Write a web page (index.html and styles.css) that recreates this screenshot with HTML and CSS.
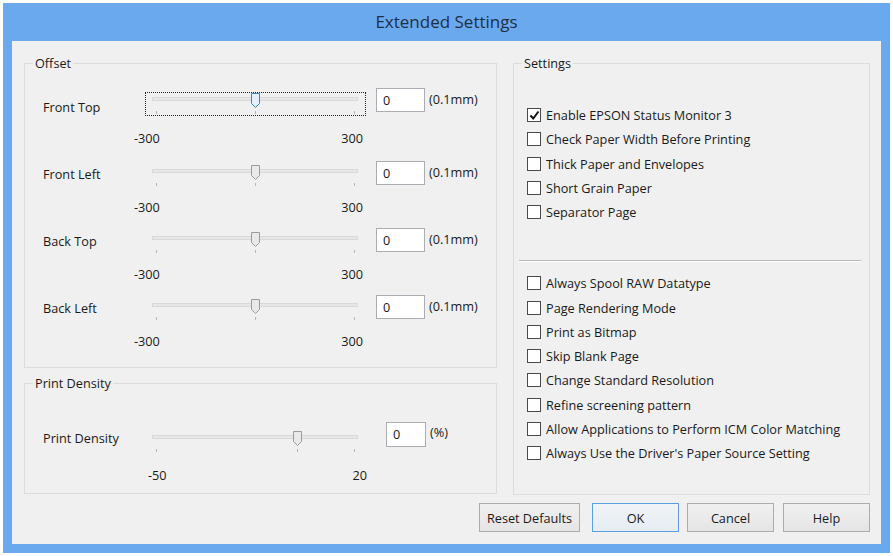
FILE: index.html
```html
<!DOCTYPE html>
<html>
<head>
<meta charset="utf-8">
<title>Extended Settings</title>
<link rel="stylesheet" href="styles.css">
</head>
<body>
<div class="window">
  <div class="titlebar">Extended Settings</div>
  <div class="client">
    <div class="columns">
      <div class="left-col">
        <div class="group group-offset">
          <div class="group-title">Offset</div>
          <div class="rows">
            <div class="row row-first">
              <div class="row-label">Front Top</div>
              <div class="slider-col">
                <div class="slider focused" style="--f:0.5">
                  <div class="track"></div>
                  <div class="ticks"><i></i><i></i></div>
                  <i class="tick-zero"></i>
                  <svg class="thumb" width="9" height="15" viewBox="0 0 9 15"><path d="M0.5 0.5H8.5V10.5L4.5 14.5L0.5 10.5Z"/></svg>
                </div>
                <div class="scale"><span>-300</span><span>300</span></div>
              </div>
              <div class="field"><div class="num">0</div><div class="unit">(0.1mm)</div></div>
            </div>
            <div class="row">
              <div class="row-label">Front Left</div>
              <div class="slider-col">
                <div class="slider" style="--f:0.5">
                  <div class="track"></div>
                  <div class="ticks"><i></i><i></i></div>
                  <i class="tick-zero"></i>
                  <svg class="thumb" width="9" height="15" viewBox="0 0 9 15"><path d="M0.5 0.5H8.5V10.5L4.5 14.5L0.5 10.5Z"/></svg>
                </div>
                <div class="scale"><span>-300</span><span>300</span></div>
              </div>
              <div class="field"><div class="num">0</div><div class="unit">(0.1mm)</div></div>
            </div>
            <div class="row">
              <div class="row-label">Back Top</div>
              <div class="slider-col">
                <div class="slider" style="--f:0.5">
                  <div class="track"></div>
                  <div class="ticks"><i></i><i></i></div>
                  <i class="tick-zero"></i>
                  <svg class="thumb" width="9" height="15" viewBox="0 0 9 15"><path d="M0.5 0.5H8.5V10.5L4.5 14.5L0.5 10.5Z"/></svg>
                </div>
                <div class="scale"><span>-300</span><span>300</span></div>
              </div>
              <div class="field"><div class="num">0</div><div class="unit">(0.1mm)</div></div>
            </div>
            <div class="row">
              <div class="row-label">Back Left</div>
              <div class="slider-col">
                <div class="slider" style="--f:0.5">
                  <div class="track"></div>
                  <div class="ticks"><i></i><i></i></div>
                  <i class="tick-zero"></i>
                  <svg class="thumb" width="9" height="15" viewBox="0 0 9 15"><path d="M0.5 0.5H8.5V10.5L4.5 14.5L0.5 10.5Z"/></svg>
                </div>
                <div class="scale"><span>-300</span><span>300</span></div>
              </div>
              <div class="field"><div class="num">0</div><div class="unit">(0.1mm)</div></div>
            </div>
          </div>
        </div>
        <div class="group group-density">
          <div class="group-title">Print Density</div>
          <div class="row row-density">
            <div class="row-label">Print Density</div>
            <div class="slider-col">
              <div class="slider" style="--f:0.7143">
                <div class="track"></div>
                <div class="ticks"><i></i><i></i></div>
                <i class="tick-zero"></i>
                <svg class="thumb" width="9" height="15" viewBox="0 0 9 15"><path d="M0.5 0.5H8.5V10.5L4.5 14.5L0.5 10.5Z"/></svg>
              </div>
              <div class="scale scale-density"><span>-50</span><span>20</span></div>
            </div>
            <div class="field field-density"><div class="num num-density">0</div><div class="unit">(%)</div></div>
          </div>
        </div>
      </div>
      <div class="group group-settings">
        <div class="group-title">Settings</div>
        <ul class="checks checks-top">
          <li><span class="box checked"><svg width="11" height="11" viewBox="0 0 11 11"><path d="M1.5 5.5L4.2 8.5L9.5 1.5" fill="none" stroke="#111" stroke-width="2"/></svg></span>Enable EPSON Status Monitor 3</li>
          <li><span class="box"></span>Check Paper Width Before Printing</li>
          <li><span class="box"></span>Thick Paper and Envelopes</li>
          <li><span class="box"></span>Short Grain Paper</li>
          <li><span class="box"></span>Separator Page</li>
        </ul>
        <div class="separator"></div>
        <ul class="checks checks-bottom">
          <li><span class="box"></span>Always Spool RAW Datatype</li>
          <li><span class="box"></span>Page Rendering Mode</li>
          <li><span class="box"></span>Print as Bitmap</li>
          <li><span class="box"></span>Skip Blank Page</li>
          <li><span class="box"></span>Change Standard Resolution</li>
          <li><span class="box"></span>Refine screening pattern</li>
          <li><span class="box"></span>Allow Applications to Perform ICM Color Matching</li>
          <li><span class="box"></span>Always Use the Driver's Paper Source Setting</li>
        </ul>
      </div>
    </div>
    <div class="buttons">
      <button class="btn btn-reset">Reset Defaults</button>
      <button class="btn btn-default">OK</button>
      <button class="btn">Cancel</button>
      <button class="btn btn-help">Help</button>
    </div>
  </div>
</div>
</body>
</html>
```

FILE: styles.css
```css
* { box-sizing: border-box; }
html, body { margin: 0; padding: 0; background: #ffffff; }
body {
  font-family: "Open Sans", "Noto Sans", sans-serif;
  font-size: 12.7px;
  color: #1a1a1a;
}
.window {
  margin: 3px 0 0 3px;
  width: 887px;
  height: 550px;
  background: #6ba9ee;
  display: flex;
  flex-direction: column;
}
.titlebar {
  height: 38px;
  line-height: 38px;
  text-align: center;
  font-size: 17px;
  color: #1f2f42;
}
.client {
  margin: 0 9px;
  height: 503px;
  background: #f0f0f0;
  padding: 22px 11px 0 12px;
}
.columns {
  display: flex;
  gap: 16px;
}
.left-col {
  width: 473px;
  display: flex;
  flex-direction: column;
  gap: 15px;
}
.group {
  border: 1px solid #dcdcdc;
}
.group-title {
  display: block;
  width: fit-content;
  margin: -9px 0 0 8px;
  padding: 0 2px;
  line-height: 16px;
  height: 16px;
  background: #f0f0f0;
}
.group-offset { height: 305px; }
.group-density { height: 111px; }
.group-settings { width: 357px; height: 432px; }

.rows { margin-top: 23px; padding-left: 18px; }
.row {
  display: flex;
  align-items: flex-start;
  height: 67px;
}
.row-label {
  width: 102px;
  margin-top: 5px;
  line-height: 16px;
}
.slider-col { width: 221px; }
.slider {
  position: relative;
  height: 24px;
  margin-top: 3px;
  border: 1px dotted transparent;
}
.slider.focused { border-color: #222; }
.track {
  margin: 4px 7px 0 6px;
  height: 4px;
  border: 1px solid #d9d9d9;
  background: #e7e7e7;
}
.ticks {
  display: flex;
  justify-content: space-between;
  margin: 10px 10px 0 10px;
}
.ticks i, .tick-zero {
  display: block;
  width: 1px;
  height: 3px;
  background: #b5b5b5;
}
.tick-zero {
  position: absolute;
  top: 18px;
  left: calc(10px + var(--f) * 198px);
}
.thumb {
  position: absolute;
  top: 0;
  left: calc(6px + var(--f) * 198px);
  display: block;
}
.thumb path { fill: #e9e9e9; stroke: #9b9b9b; }
.focused .thumb path { fill: #e3effb; stroke: #3c82d6; }
.scale {
  display: flex;
  justify-content: space-between;
  margin: 11px 0 0 -11px;
  width: 229px;
  line-height: 16px;
}
.scale-density { margin: 13px 0 0 3px; width: 219px; }
.field {
  display: flex;
  align-items: flex-start;
  margin-left: 10px;
}
.num {
  width: 49px;
  height: 24px;
  border: 1px solid #abadb3;
  background: #ffffff;
  padding-left: 6px;
  line-height: 22px;
}
.unit {
  margin-left: 4px;
  margin-top: 3px;
  line-height: 16px;
}
.row-first .slider { margin-top: -2px; }
.row-first .scale { margin-top: 14px; }
.row-first .field { margin-top: -6px; }

.row-density { margin-top: 34px; padding-left: 18px; }
.row-density .slider { margin-top: 5px; }
.field-density { margin-left: 20px; margin-top: -3px; }
.num-density { width: 40px; height: 25px; line-height: 23px; }
.field-density .unit { margin-top: 2px; }

.checks {
  list-style: none;
  margin: 0;
  padding: 0 0 0 13px;
}
.checks-top { margin-top: 32px; }
.checks li {
  display: flex;
  align-items: center;
  height: 24.25px;
  line-height: 16px;
}
.box {
  width: 14px;
  height: 14px;
  border: 1px solid #4a4a4a;
  background: #ffffff;
  margin-right: 5px;
  flex: none;
  display: flex;
  align-items: center;
  justify-content: center;
}
.box svg { display: block; }
.separator {
  margin: 36px 8px 0 5px;
  border-top: 1px solid #b9b9b9;
  border-bottom: 1px solid #ffffff;
}
.checks-bottom { margin-top: 9px; }

.buttons {
  display: flex;
  justify-content: flex-end;
  gap: 8px;
  margin-top: 8px;
}
.btn {
  font-family: inherit;
  font-size: inherit;
  color: #1a1a1a;
  width: 87px;
  height: 29px;
  padding: 0;
  border: 1px solid #acacac;
  background: linear-gradient(#f0f0f0, #e5e5e5);
  border-radius: 0;
}
.btn-reset { width: 101px; margin-right: 4px; }
.btn-default { border-color: #5a9fe3; background: linear-gradient(#f0f4f8, #e6ecf2); }
.btn-help { margin-left: 1px; }
```
